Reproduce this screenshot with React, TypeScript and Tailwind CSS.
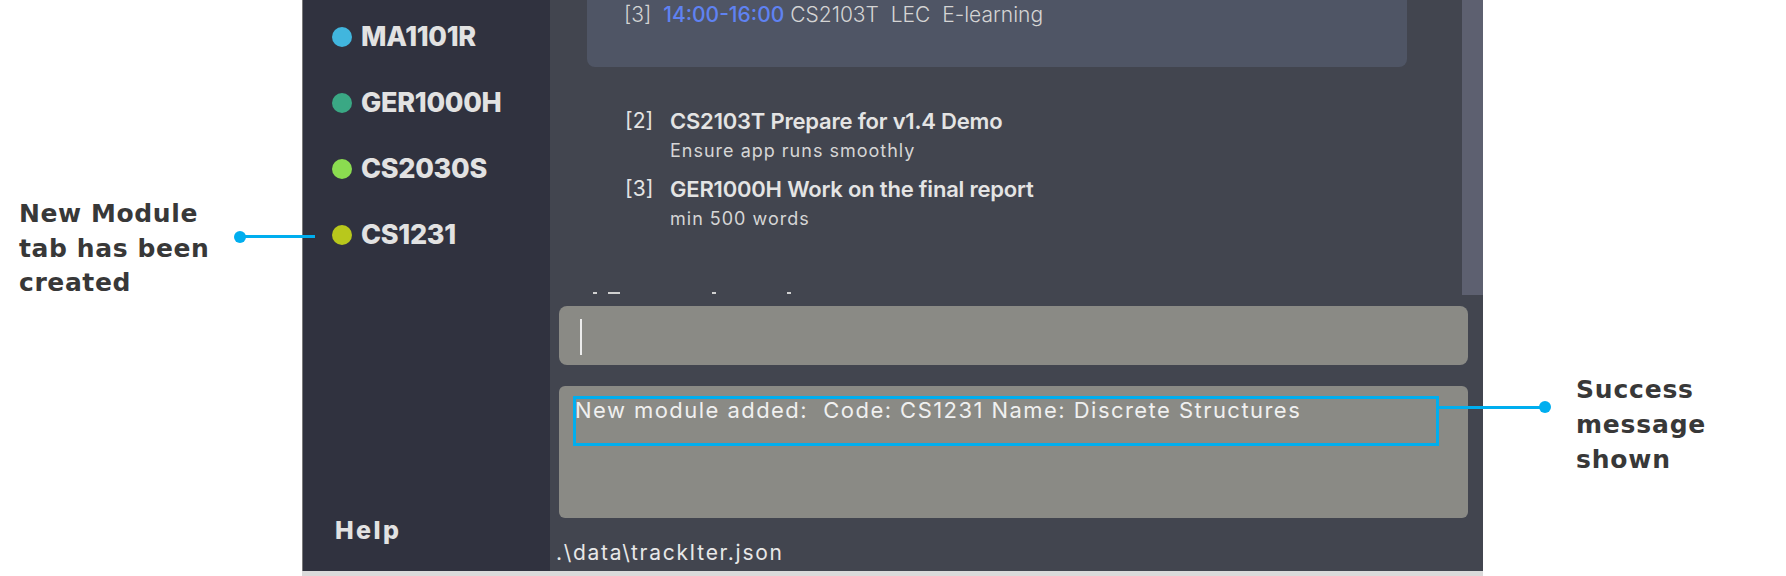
import React from 'react';

const modules = [
  { code: 'MA1101R', dot: 'bg-[#41b6de]' },
  { code: 'GER1000H', dot: 'bg-[#3aa884]' },
  { code: 'CS2030S', dot: 'bg-[#8bdc50]' },
  { code: 'CS1231', dot: 'bg-[#b8c81c]' },
];

const tasks = [
  { idx: '[2]', title: 'CS2103T Prepare for v1.4 Demo', desc: 'Ensure app runs smoothly' },
  { idx: '[3]', title: 'GER1000H Work on the final report', desc: 'min 500 words' },
];

const App = () => {
  return (
    <div className="relative flex w-[1786px] h-[576px] bg-white font-['Inter',sans-serif] overflow-hidden">
      {/* Left annotation */}
      <div className="w-[302px] shrink-0 pt-[197px] pl-[19px]">
        <p className="font-['DejaVu_Sans',sans-serif] text-[25px] leading-[34.5px] font-bold text-[#383838] tracking-[0.6px]">
          New Module
          <br />
          tab has been
          <br />
          created
        </p>
      </div>

      {/* App window */}
      <div className="w-[1181px] shrink-0 flex flex-col">
        <div className="flex h-[571px] border-l border-[#7a7a7a]">
          {/* Sidebar */}
          <div className="w-[247px] shrink-0 bg-[#30323f] flex flex-col justify-between pt-[4px] pb-[26px]">
            <div className="flex flex-col">
              {modules.map((m) => (
                <div key={m.code} className="h-[66px] flex items-center pl-[29px]">
                  <span className={`w-[20px] h-[20px] rounded-full ${m.dot}`}></span>
                  <span className="ml-[9px] text-[27px] font-extrabold text-[#e2e2e2] tracking-[-0.3px]">{m.code}</span>
                </div>
              ))}
            </div>
            <div className="pl-[32px] text-[25px] leading-[30px] font-extrabold text-[#e2e2e2] tracking-[2.4px]">Help</div>
          </div>

          {/* Main panel */}
          <div className="flex-1 bg-[#42454f] flex flex-col">
            {/* Scroll area */}
            <div className="flex h-[295px]">
              <div className="flex-1 overflow-hidden">
                <div className="ml-[37px] mr-[55px] h-[67px] bg-[#4f5565] rounded-b-lg pt-[1px] pl-[37px] text-[21px] leading-[28px] text-[#d4d4d4] font-light">
                  [3]&nbsp;&nbsp;<span className="text-[#5f82f2] font-medium">14:00-16:00</span> CS2103T&nbsp;&nbsp;LEC&nbsp;&nbsp;E-learning
                </div>

                <div className="mt-[40px] ml-[75px] flex flex-col gap-[12px]">
                  {tasks.map((t) => (
                    <div key={t.title} className="flex">
                      <span className="w-[45px] text-[21px] leading-[28px] text-[#e4e4e4]">{t.idx}</span>
                      <div className="flex flex-col gap-[4px]">
                        <span className="text-[22px] leading-[28px] font-semibold text-[#e4e4e4] tracking-[-0.2px]">{t.title}</span>
                        <span className="text-[18px] leading-[24px] text-[#d6d6d6] tracking-[1px]">{t.desc}</span>
                      </div>
                    </div>
                  ))}
                </div>

                {/* clipped next heading */}
                <div className="mt-[61px] ml-[43px] flex items-start h-[2px]">
                  <span className="w-[4px] h-[2px] bg-[#d0d0d0]"></span>
                  <span className="ml-[11px] w-[12px] h-[2px] bg-[#d0d0d0]"></span>
                  <span className="ml-[92px] w-[4px] h-[2px] bg-[#d0d0d0]"></span>
                  <span className="ml-[71px] w-[4px] h-[2px] bg-[#d0d0d0]"></span>
                </div>
              </div>
              <div className="w-[21px] bg-[#5d6070]"></div>
            </div>

            {/* Command box */}
            <div className="mt-[11px] ml-[9px] mr-[15px] h-[59px] bg-[#8a8a85] rounded-lg pt-[13px] pl-[21px]">
              <div className="w-[2px] h-[36px] bg-[#ececec]"></div>
            </div>

            {/* Result box */}
            <div className="relative mt-[21px] ml-[9px] mr-[15px] h-[132px] bg-[#8a8a85] rounded-md pt-[10px] pl-[16px]">
              <p className="text-[22px] leading-[28px] text-[#f0f0f0] tracking-[1.45px]">
                New module added:&nbsp;&nbsp;Code: CS1231 Name: Discrete Structures
              </p>
              <div className="absolute left-[14px] top-[10px] w-[866px] h-[50px] border-[3px] border-[#00aeef]"></div>
            </div>

            {/* Status bar */}
            <div className="mt-[22px] pl-[6px] text-[21px] leading-[26px] text-[#e8e8e8] tracking-[1.7px]">.\data\trackIter.json</div>
          </div>
        </div>
        <div className="h-[5px] bg-[#dadada]"></div>
      </div>

      {/* Right annotation */}
      <div className="flex-1 pt-[372px] pl-[93px]">
        <p className="font-['DejaVu_Sans',sans-serif] text-[25px] leading-[35px] font-bold text-[#383838] tracking-[0.8px]">
          Success
          <br />
          message
          <br />
          shown
        </p>
      </div>

      {/* Annotation connectors */}
      <div className="absolute left-[234px] top-[231px] w-[12px] h-[12px] rounded-full bg-[#00aeef]"></div>
      <div className="absolute left-[240px] top-[235px] w-[75px] h-[3px] bg-[#00aeef]"></div>
      <div className="absolute left-[1439px] top-[406px] w-[106px] h-[3px] bg-[#00aeef]"></div>
      <div className="absolute left-[1539px] top-[401px] w-[12px] h-[12px] rounded-full bg-[#00aeef]"></div>
    </div>
  );
};

export default App;
